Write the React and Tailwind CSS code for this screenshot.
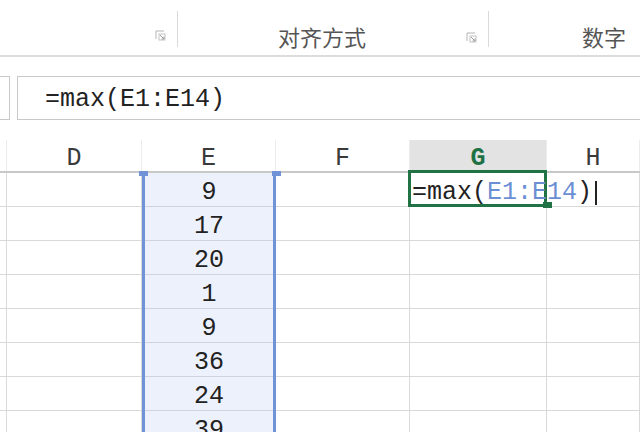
import React from 'react';

const mono = { fontFamily: '"Liberation Mono", "DejaVu Sans Mono", monospace' };

const columns = [
  { key: 'C', width: 'w-[7px]' },
  { key: 'D', width: 'w-[135px]' },
  { key: 'E', width: 'w-[134px]' },
  { key: 'F', width: 'w-[134px]' },
  { key: 'G', width: 'w-[137px]' },
  { key: 'H', width: 'flex-1' },
];

const values = ['9', '17', '20', '1', '9', '36', '24', '39'];

const Launcher = () => (
  <svg width="11" height="11" viewBox="0 0 11 11" className="mb-[2px]">
    <path d="M1 9V1h8" fill="none" stroke="#b5b5b5" strokeWidth="1" />
    <rect x="4" y="4" width="6" height="6" fill="none" stroke="#c4c4c4" strokeWidth="1" />
    <path d="M5 5l4 4M9 6.5V9H6.5" fill="none" stroke="#9a9a9a" strokeWidth="1" />
  </svg>
);

const App = () => {
  return (
    <div className="w-[640px] h-[432px] overflow-hidden bg-white">
      {/* Ribbon */}
      <div className="h-[57px] flex border-b-2 border-[#dcdcdc] bg-white">
        <div className="w-[177px] flex items-end justify-end pr-[11px] pb-[12px]">
          <Launcher />
        </div>
        <div className="w-[1px] bg-[#dadada] mt-[11px] mb-[8px]" />
        <div className="w-[310px] flex items-end pb-[6px]">
          <div className="flex-1 text-center text-[22px] text-[#555] leading-none pb-[2px]" style={{ fontFamily: '"Noto Sans CJK SC", sans-serif' }}>
            对齐方式
          </div>
          <div className="pr-[11px] pb-[4px]">
            <Launcher />
          </div>
        </div>
        <div className="w-[1px] bg-[#dadada] mt-[11px] mb-[8px]" />
        <div className="flex-1 flex items-end justify-end pr-[14px] pb-[8px]">
          <span className="text-[22px] text-[#555] leading-none" style={{ fontFamily: '"Noto Sans CJK SC", sans-serif' }}>数字</span>
        </div>
      </div>

      {/* Formula bar */}
      <div className="flex gap-[7px] pt-[19px] h-[63px]">
        <div className="w-[10px] h-[44px] border border-l-0 border-[#c9c9c9] bg-white" />
        <div className="flex-1 h-[44px] border border-r-0 border-[#c9c9c9] bg-white flex items-center pl-[27px] pt-[3px]">
          <span className="text-[25px] text-[#222] leading-none" style={mono}>=max(E1:E14)</span>
        </div>
      </div>

      {/* Sheet */}
      <div className="relative mt-[20px]">
        {/* Column headers */}
        <div className="flex h-[33px] border-b-2 border-[#c8c8c8]">
          {columns.map((col) => (
            <div
              key={col.key}
              className={`${col.width} h-full flex items-center justify-center pt-[5px] border-r border-[#ececec] ${col.key === 'G' ? 'bg-[#e3e3e3]' : ''}`}
            >
              {col.key !== 'C' && (
                <span
                  className={`text-[25px] leading-none ${col.key === 'G' ? 'text-[#1e7145] font-bold' : 'text-[#3a3a3a]'}`}
                  style={mono}
                >
                  {col.key}
                </span>
              )}
            </div>
          ))}
        </div>

        {/* Rows */}
        {values.map((v, i) => (
          <div key={i} className="flex h-[34px]">
            {columns.map((col) => {
              if (col.key === 'E') {
                return (
                  <div
                    key={col.key}
                    className={`${col.width} h-full bg-[#edf1fb] border-l-[3px] border-r-[3px] border-[#6f93d6] flex`}
                  >
                    <div className="flex-1 border-b border-[#cfd3dc] flex items-center justify-center pt-[6px]">
                      <span className="text-[25px] text-[#222] leading-none" style={mono}>{v}</span>
                    </div>
                  </div>
                );
              }
              if (col.key === 'G' && i === 0) {
                return (
                  <div key={col.key} className={`${col.width} h-full relative border-r border-b border-[#d9d9d9]`}>
                    <div className="absolute -left-[2px] -top-[3px] w-[139px] h-[37px] border-[3px] border-[#217346]" />
                    <div className="absolute left-[133px] top-[29px] w-[9px] h-[6px] bg-[#217346]" />
                    <div className="absolute left-[2px] top-[3px] h-full flex items-center whitespace-nowrap">
                      <span className="text-[25px] text-[#222] leading-none" style={mono}>
                        =max(<span className="text-[#6c8fd4]">E1:E14</span>)
                      </span>
                      <span className="ml-[3px] w-[2px] h-[24px] bg-[#222]" />
                    </div>
                  </div>
                );
              }
              return (
                <div
                  key={col.key}
                  className={`${col.width} h-full border-r border-b border-[#d9d9d9]`}
                />
              );
            })}
          </div>
        ))}

        {/* Selection handles on E column */}
        <div className="absolute left-[139px] top-[31px] w-[9px] h-[5px] bg-[#6f93d6]" />
        <div className="absolute left-[272px] top-[31px] w-[9px] h-[5px] bg-[#6f93d6]" />
      </div>
    </div>
  );
};

export default App;
